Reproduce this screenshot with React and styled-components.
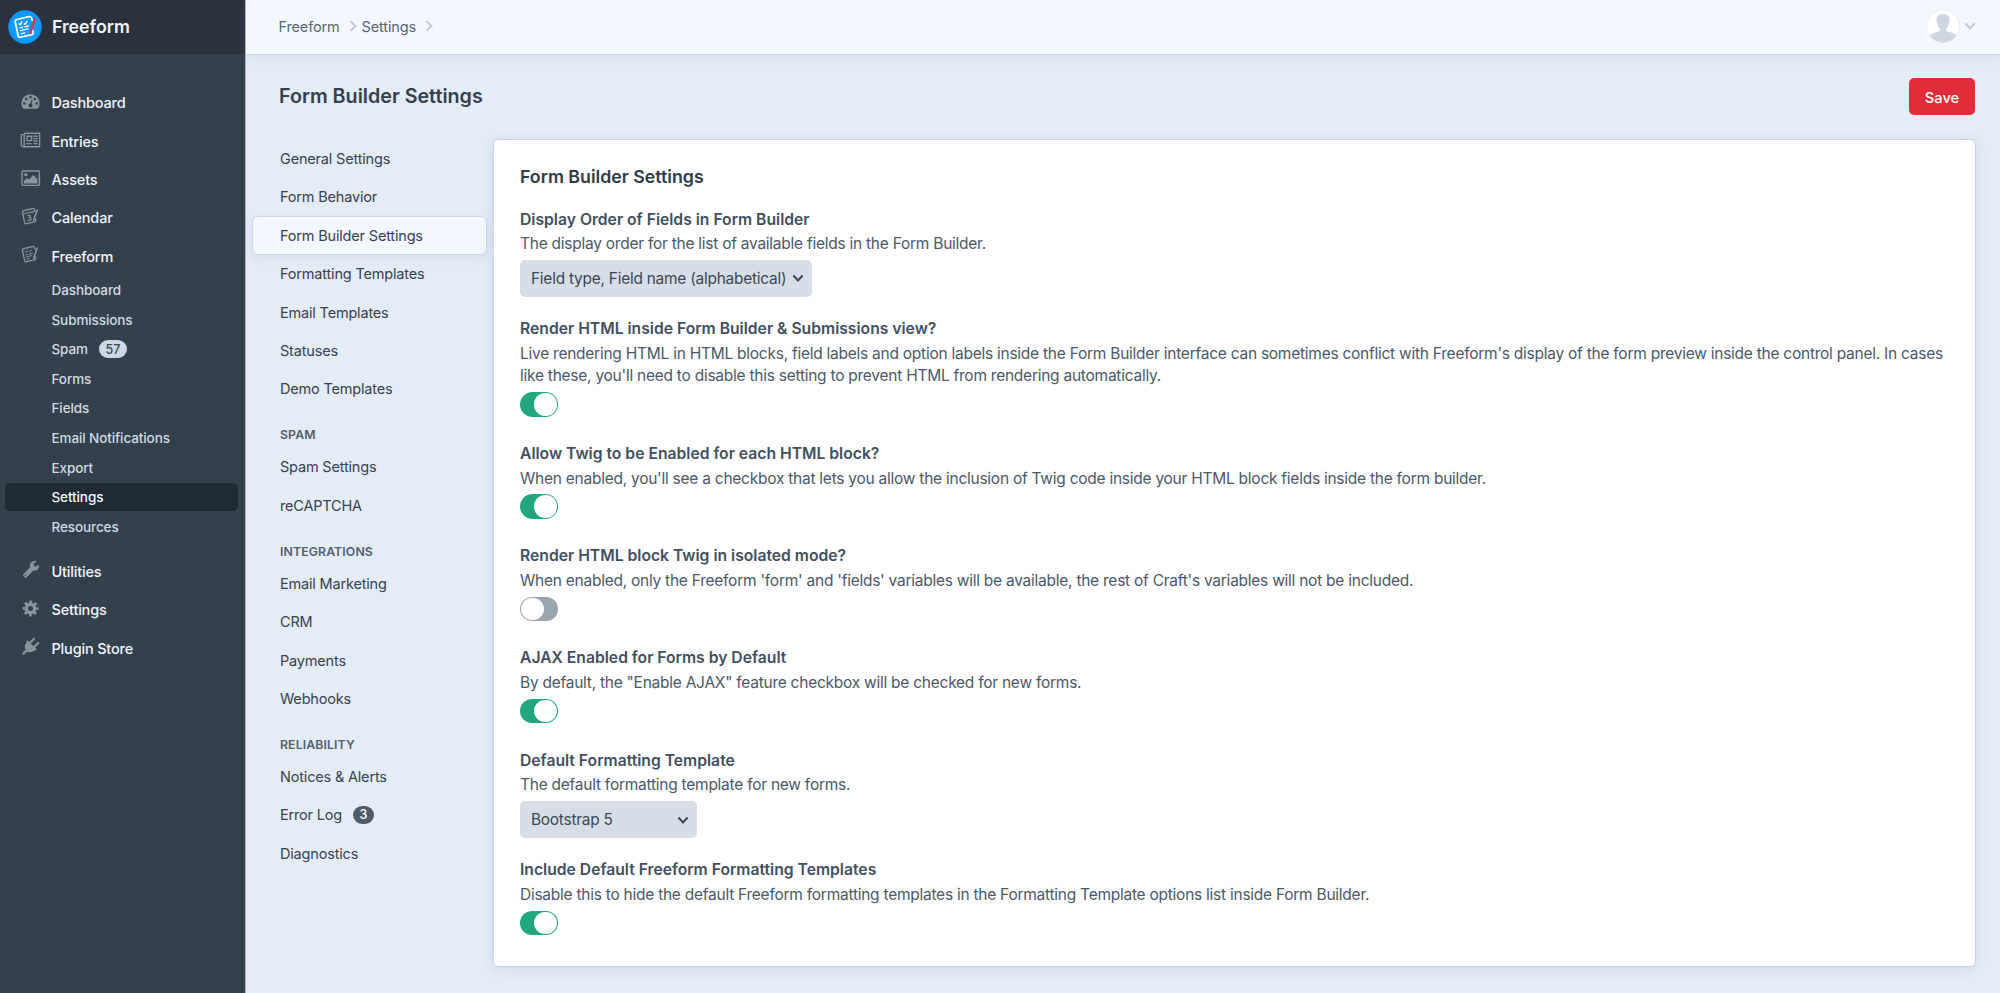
import React from 'react';
import styled, { createGlobalStyle } from 'styled-components';

const GlobalStyle = createGlobalStyle`
  * { box-sizing: border-box; }
  html, body { margin: 0; height: 100%; overflow: hidden; }
  body {
    font-family: Inter, "Liberation Sans", sans-serif;
    color: #3f4d5a;
    background: #e4ecf6;
  }
  h1, h2, h3, p { margin: 0; }
`;

const Page = styled.div`
  display: flex;
  width: 100%;
  height: 993px;
`;

/* Global sidebar */

const Sidebar = styled.aside`
  flex: none;
  width: 246px;
  height: 100%;
  background: #33404d;
  border-right: 1px solid #aeb7c1;
`;

const Brand = styled.div`
  display: flex;
  align-items: center;
  gap: 10px;
  height: 54px;
  padding: 0 8px 1px;
  background: #29323d;
  color: #f1f5fa;
  font-size: 17.7px;
  font-weight: 600;
`;

const NavGroup = styled.nav`
  padding-top: ${(p) => p.$top}px;
`;

const NavItem = styled.a`
  display: flex;
  align-items: center;
  height: 38.4px;
  padding-left: 20px;
  color: #f1f5fa;
  font-size: 14.5px;
  font-weight: 500;
  letter-spacing: -0.18px;
`;

const NavIcon = styled.span`
  display: flex;
  width: 21px;
  height: 22px;
  margin: 0 10.5px 2px 0;
  color: #8a949f;
`;

const SubNav = styled.div`
  display: flex;
  flex-direction: column;
  padding-top: 0.5px;
`;

const SubItem = styled.a`
  display: flex;
  align-items: center;
  gap: 11px;
  height: 28px;
  margin: 0 7px 1.6px 5px;
  padding-left: 46.5px;
  border-radius: 5px;
  background: ${(p) => (p.$active ? '#1f2a34' : 'transparent')};
  color: ${(p) => (p.$active ? '#f6f9fc' : '#d3dbe4')};
  font-size: 13.5px;
  font-weight: 500;
  letter-spacing: -0.1px;
`;

const Badge = styled.span`
  display: inline-flex;
  align-items: center;
  justify-content: center;
  min-width: ${(p) => (p.$dark ? 21 : 28)}px;
  height: 18px;
  border-radius: 9px;
  background: ${(p) => (p.$dark ? '#4f5c68' : '#cdd8e4')};
  color: ${(p) => (p.$dark ? '#ffffff' : '#3a4754')};
  font-size: 12.5px;
  font-weight: 500;
  letter-spacing: 0;
`;

/* Main column */

const Main = styled.div`
  flex: 1;
  min-width: 0;
  display: flex;
  flex-direction: column;
`;

const TopBar = styled.header`
  display: flex;
  align-items: center;
  justify-content: space-between;
  height: 54.5px;
  padding: 0 24px 1px 32.5px;
  background: #f3f7fe;
  border-bottom: 1px solid #cbd5e3;
  box-shadow: 0 2px 10px rgba(120, 145, 190, 0.16);
`;

const Crumbs = styled.div`
  display: flex;
  align-items: center;
  color: #596673;
  font-size: 14.5px;
  letter-spacing: -0.15px;

  svg { margin: 0 3px 0 7px; }
`;

const Account = styled.div`
  display: flex;
  align-items: center;
  gap: 4px;
  padding-bottom: 1px;
`;

const TitleRow = styled.div`
  display: flex;
  align-items: center;
  justify-content: space-between;
  height: 84.5px;
  padding: 0 25px 0 33px;
`;

const Title = styled.h1`
  padding-bottom: 1.5px;
  color: #33404d;
  font-size: 19.7px;
  font-weight: 600;
  line-height: 26px;
`;

const SaveButton = styled.button`
  width: 66px;
  height: 37px;
  border: 0;
  border-radius: 5px;
  background: #e12d39;
  color: #fff;
  font: 500 14.7px Inter, "Liberation Sans", sans-serif;
  padding: 2px 0 0;
`;

const Body = styled.div`
  display: flex;
  align-items: flex-start;
`;

const SideNav = styled.nav`
  flex: none;
  width: 247px;
  padding: 0.4px 6px 0;
`;

const SideItem = styled.a`
  display: flex;
  align-items: center;
  gap: 11px;
  height: 38.4px;
  padding-left: 27px;
  border: 1px solid ${(p) => (p.$active ? '#cbd5e6' : 'transparent')};
  border-radius: 6px;
  background: ${(p) => (p.$active ? '#f3f7fe' : 'transparent')};
  box-shadow: ${(p) => (p.$active ? '0 3px 10px rgba(120, 145, 190, 0.16)' : 'none')};
  color: #35424f;
  font-size: 14.5px;
  letter-spacing: -0.18px;
`;

const SideHeading = styled.div`
  height: 39.6px;
  padding: 19px 0 0 28px;
  color: #51606d;
  font-size: 12.3px;
  font-weight: 600;
  line-height: 15px;
  letter-spacing: 0.1px;
`;

const Card = styled.section`
  flex: 1;
  height: 828px;
  margin-right: 24.5px;
  padding: 25px 26px 0;
  border: 1px solid #cbd5e6;
  border-radius: 6px;
  background: #fff;
  box-shadow: 0 2px 13px rgba(120, 145, 190, 0.22);
`;

const CardTitle = styled.h2`
  margin-bottom: 19.5px;
  color: #2f3b48;
  font-size: 17.75px;
  font-weight: 600;
  line-height: 24px;
`;

const Field = styled.div`
  margin-bottom: ${(p) => (p.$kind === 'select' ? 21.2 : 26.2)}px;
`;

const Label = styled.h3`
  color: #41505e;
  font-size: 15.7px;
  font-weight: 600;
  line-height: 22.1px;
`;

const Help = styled.p`
  margin: 2.6px 0 4.4px;
  color: #4b5967;
  font-size: 15.5px;
  line-height: 22.4px;
  letter-spacing: -0.25px;
  white-space: pre-line;
`;

const SelectBox = styled.div`
  display: flex;
  align-items: center;
  justify-content: space-between;
  width: ${(p) => p.$width}px;
  height: 37px;
  padding: 0 8px 0 11px;
  border-radius: 5px;
  background: #d7dee7;
  color: #3a4754;
  font-size: 15.4px;
  letter-spacing: -0.22px;
  white-space: nowrap;
`;

const Switch = styled.div`
  display: flex;
  justify-content: ${(p) => (p.$on ? 'flex-end' : 'flex-start')};
  width: 37.5px;
  height: 24.6px;
  padding: 1px;
  border-radius: 13px;
  background: ${(p) => (p.$on ? '#20a77f' : '#9aa5b1')};

  &::after {
    content: '';
    width: 22.6px;
    height: 22.6px;
    border-radius: 50%;
    background: #fff;
  }
`;

/* Icons */

const Chevron = ({ size = 12, color = '#3c4956', right }) => (
  <svg width={size} height={size} viewBox="0 0 12 12" fill="none" stroke={color} strokeWidth="2.1">
    <path d={right ? 'M3.5 1.2 8.4 6 3.5 10.8' : 'M1.4 3.6 6 8.4 10.6 3.6'} />
  </svg>
);

const Sheet = ({ children, pen = 'currentColor' }) => (
  <g fill="none" stroke="currentColor" strokeWidth="1.3" strokeLinecap="round" strokeLinejoin="round">
    <path d="M15 5.2 14.6 3.6Q14.2 2.2 12.8 2.5L3.6 4.6Q2.2 5 2.5 6.4L4.6 16.6Q5 18 6.4 17.7L14.8 15.8Q16 15.4 15.8 14.2L15.6 12.8" />
    {children}
    <path d="M17.2 4 14.3 12.2 13.6 14.6" stroke={pen} strokeWidth="1.6" />
  </g>
);

const formLines = (
  <path
    d="M5.3 7.7 6.1 8.5 7.4 6.3M9.2 7.8 9.8 8.2 11.2 6M5.9 10.8 8 10.4M9.6 10 12.2 9.4M6.3 12.9 11.8 11.6M7 15 9.4 14.5"
    strokeWidth="1"
  />
);

const icons = {
  gauge: (
    <>
      <path
        fill="currentColor"
        fillRule="evenodd"
        d="M10.5 3.2a9 9 0 0 0-9 9c0 2 .5 3.5 1.3 4.9.2.4.5.6 1 .6h13.4c.5 0 .8-.2 1-.6.8-1.4 1.3-2.9 1.3-4.9a9 9 0 0 0-9-9ZM4.3 11.2a1.3 1.3 0 1 1 0 2.6 1.3 1.3 0 0 1 0-2.6Zm1.9-4.5a1.3 1.3 0 1 1 0 2.6 1.3 1.3 0 0 1 0-2.6Zm4.3-1.9a1.3 1.3 0 1 1 0 2.6 1.3 1.3 0 0 1 0-2.6Zm4.3 1.9a1.3 1.3 0 1 1 0 2.6 1.3 1.3 0 0 1 0-2.6Zm1.9 4.5a1.3 1.3 0 1 1 0 2.6 1.3 1.3 0 0 1 0-2.6Z"
      />
      <path d="M12 8.8 10.6 14" stroke="#33404d" strokeWidth="1.2" />
      <circle cx="10.4" cy="14.6" r="2" fill="#33404d" />
    </>
  ),
  news: (
    <g fill="none" stroke="currentColor" strokeWidth="1.4">
      <path d="M4.2 4.2h15.4v12.6a.9.9 0 0 1-.9.9H3a1.6 1.6 0 0 1-1.7-1.6V5.6h2.9v10.6a1.3 1.3 0 0 1-1.4 1.3" />
      <path d="M7 7.2h4.6v4.4H7ZM13.4 7.2h4.2M13.4 9.6h4.2M13.4 12h4.2M6.4 14.6h5.2M13.4 14.6h4.2" />
    </g>
  ),
  image: (
    <>
      <rect x="2" y="4" width="17.4" height="14.4" rx="1.2" fill="none" stroke="currentColor" strokeWidth="1.4" />
      <circle cx="5.8" cy="7.6" r="1.6" fill="currentColor" />
      <path d="M4 16.4v-2.3l3.1-3.1 1.7 1.7 4.6-4.6 4.1 4.2v4.1Z" fill="currentColor" />
    </>
  ),
  calendar: (
    <Sheet>
      <path d="M3 8 14.6 5.4M7.6 9.8Q10.6 8.6 10.4 10.4 10.2 11.5 9 11.6 11.2 11.5 11 13.2 10.4 15 8 14.2" strokeWidth="1.2" />
    </Sheet>
  ),
  form: <Sheet>{formLines}</Sheet>,
  wrench: (
    <path
      fill="currentColor"
      fillRule="evenodd"
      d="M18.9 6.3c-.2-.3-.5-.2-.8 0l-2.5 1.5-2-1.1V4.4l2.6-1.5c.3-.2.4-.5 0-.7-2.8-1-6.3.8-6.3 4.5 0 .6.1 1.1.3 1.6l-6.700 6.700a1.700 1.700 0 0 0 0 2.300l.9.9c.7.7 1.700.7 2.300 0l6.700-6.700c3 1.100 6-1.400 5.500-5.200ZM5.400 15.500a.8.8 0 1 1 0 1.600.8.8 0 0 1 0-1.600Z"
    />
  ),
  gear: (
    <g fill="none" stroke="currentColor">
      <circle cx="10.5" cy="10.5" r="4.2" strokeWidth="3.4" />
      <circle cx="10.5" cy="10.5" r="6.7" strokeWidth="2.4" strokeDasharray="2.7 2.562" strokeDashoffset="1.35" />
    </g>
  ),
  plug: (
    <g transform="rotate(45 10.5 10.5)">
      <path fill="currentColor" d="M3.9 8.2h13.2v1.8h-1.100c0 3.700-1.900 5.700-4.300 6.200v5.200H9.300v-5.200C6.900 15.700 5 13.700 5 10H3.900Z" />
      <path d="M7.5 8.5V2.6M13.5 8.5V2.6" stroke="currentColor" strokeWidth="2.2" strokeLinecap="round" />
    </g>
  ),
};

const Icon = ({ name }) => (
  <svg width="21" height="22" viewBox="0 0 21 22">
    {icons[name]}
  </svg>
);

const Logo = () => (
  <svg width="34" height="34" viewBox="0 0 34 34">
    <circle cx="17" cy="17" r="16.7" fill="#0d99ff" />
    <g transform="translate(3.900 3.300) scale(1.350)" color="#fff">
      <Sheet pen="#e5323e">{formLines}</Sheet>
    </g>
  </svg>
);

const Avatar = () => (
  <svg width="34" height="34" viewBox="0 0 34 34">
    <defs>
      <clipPath id="avatar"><circle cx="17" cy="17" r="16.5" /></clipPath>
    </defs>
    <circle cx="17" cy="17" r="16.5" fill="#fff" stroke="#e6ebf2" strokeWidth="0.8" />
    <path
      clipPath="url(#avatar)"
      fill="#cdd6e1"
      d="M17 5c4.400 0 6.700 2.400 6.500 6.500-.1 3-.9 5.600-2.600 7.200-.6.6-.8 1.300-.7 2.200.2 1.300 1.300 1.800 3 2.200 3.800.9 6.300 2.100 8.800 4.900V34H2v-6c2.500-2.800 5-4 8.800-4.900 1.700-.4 2.800-.9 3-2.200.1-.9-.1-1.600-.7-2.200-1.700-1.600-2.500-4.200-2.600-7.200C10.300 7.400 12.600 5 17 5Z"
    />
  </svg>
);

/* Data */

const primary = [
  ['gauge', 'Dashboard'],
  ['news', 'Entries'],
  ['image', 'Assets'],
  ['calendar', 'Calendar'],
  ['form', 'Freeform'],
];
const freeformNav = ['Dashboard', 'Submissions', 'Spam', 'Forms', 'Fields', 'Email Notifications', 'Export', 'Settings', 'Resources'];
const system = [
  ['wrench', 'Utilities'],
  ['gear', 'Settings'],
  ['plug', 'Plugin Store'],
];

const sections = [
  { items: ['General Settings', 'Form Behavior', 'Form Builder Settings', 'Formatting Templates', 'Email Templates', 'Statuses', 'Demo Templates'] },
  { heading: 'SPAM', items: ['Spam Settings', 'reCAPTCHA'] },
  { heading: 'INTEGRATIONS', items: ['Email Marketing', 'CRM', 'Payments', 'Webhooks'] },
  { heading: 'RELIABILITY', items: ['Notices & Alerts', 'Error Log', 'Diagnostics'] },
];

const fields = [
  { label: 'Display Order of Fields in Form Builder', help: 'The display order for the list of available fields in the Form Builder.', kind: 'select', value: 'Field type, Field name (alphabetical)', width: 292 },
  { label: 'Render HTML inside Form Builder & Submissions view?', help: "Live rendering HTML in HTML blocks, field labels and option labels inside the Form Builder interface can sometimes conflict with Freeform's display of the form preview inside the control panel. In cases\nlike these, you'll need to disable this setting to prevent HTML from rendering automatically.", kind: 'switch', on: true },
  { label: 'Allow Twig to be Enabled for each HTML block?', help: "When enabled, you'll see a checkbox that lets you allow the inclusion of Twig code inside your HTML block fields inside the form builder.", kind: 'switch', on: true },
  { label: 'Render HTML block Twig in isolated mode?', help: "When enabled, only the Freeform 'form' and 'fields' variables will be available, the rest of Craft's variables will not be included.", kind: 'switch', on: false },
  { label: 'AJAX Enabled for Forms by Default', help: 'By default, the "Enable AJAX" feature checkbox will be checked for new forms.', kind: 'switch', on: true },
  { label: 'Default Formatting Template', help: 'The default formatting template for new forms.', kind: 'select', value: 'Bootstrap 5', width: 176.5 },
  { label: 'Include Default Freeform Formatting Templates', help: 'Disable this to hide the default Freeform formatting templates in the Formatting Template options list inside Form Builder.', kind: 'switch', on: true },
];

const NavList = ({ items }) =>
  items.map(([icon, text]) => (
    <NavItem key={text}>
      <NavIcon><Icon name={icon} /></NavIcon>
      {text}
    </NavItem>
  ));

export default function App() {
  return (
    <Page>
      <GlobalStyle />
      <Sidebar>
        <Brand><Logo />Freeform</Brand>
        <NavGroup $top={29.5}><NavList items={primary} /></NavGroup>
        <SubNav>
          {freeformNav.map((text) => (
            <SubItem key={text} $active={text === 'Settings'}>
              {text}
              {text === 'Spam' && <Badge>57</Badge>}
            </SubItem>
          ))}
        </SubNav>
        <NavGroup $top={10}><NavList items={system} /></NavGroup>
      </Sidebar>
      <Main>
        <TopBar>
          <Crumbs>
            Freeform<Chevron right color="#c3cad4" />Settings<Chevron right color="#c3cad4" />
          </Crumbs>
          <Account><Avatar /><Chevron color="#c0c8d2" /></Account>
        </TopBar>
        <TitleRow>
          <Title>Form Builder Settings</Title>
          <SaveButton>Save</SaveButton>
        </TitleRow>
        <Body>
          <SideNav>
            {sections.map(({ heading, items }) => (
              <React.Fragment key={items[0]}>
                {heading && <SideHeading>{heading}</SideHeading>}
                {items.map((text) => (
                  <SideItem key={text} $active={text === 'Form Builder Settings'}>
                    {text}
                    {text === 'Error Log' && <Badge $dark>3</Badge>}
                  </SideItem>
                ))}
              </React.Fragment>
            ))}
          </SideNav>
          <Card>
            <CardTitle>Form Builder Settings</CardTitle>
            {fields.map((f) => (
              <Field key={f.label} $kind={f.kind}>
                <Label>{f.label}</Label>
                <Help>{f.help}</Help>
                {f.kind === 'select' ? (
                  <SelectBox $width={f.width}>{f.value}<Chevron /></SelectBox>
                ) : (
                  <Switch $on={f.on} />
                )}
              </Field>
            ))}
          </Card>
        </Body>
      </Main>
    </Page>
  );
}
